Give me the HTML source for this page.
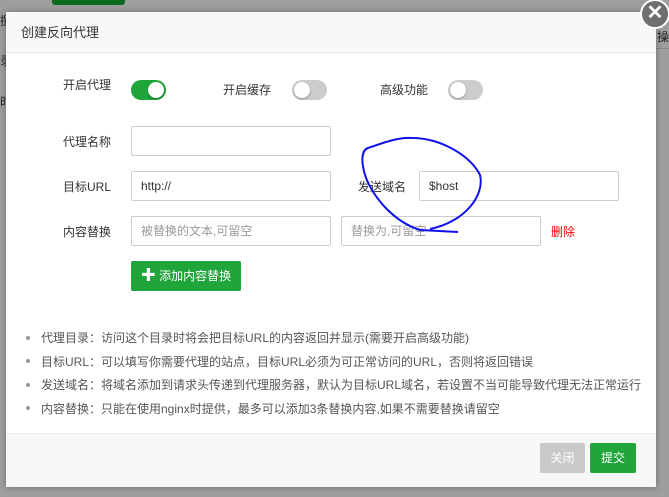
<!DOCTYPE html>
<html><head><meta charset="utf-8"><style>
*{margin:0;padding:0;box-sizing:border-box}
body{width:669px;height:497px;background:#9e9e9e;position:relative;overflow:hidden;font-family:"Liberation Sans","Noto Sans CJK SC",sans-serif;font-size:12px;color:#333}
.abs{position:absolute}
.dlg{left:6px;top:12px;width:650px;height:475px;background:#fff;box-shadow:0 0 6px rgba(0,0,0,.3)}
.hd{left:0;top:0;width:650px;height:41px;background:#f8f8f8;border-bottom:1px solid #e8e8e8;font-size:13px;line-height:41px;padding-left:15px;color:#333}
.ft{left:0;top:421px;width:650px;height:54px;background:#f6f8f8;border-top:1px solid #e8eaea}
.lbl{font-size:12px;color:#333;text-align:right;width:70px}
.inp{border:1px solid #ccc;border-radius:2px;height:30px;width:200px;background:#fff;line-height:28px;padding-left:9px;font-size:12px;color:#333}
.ph{color:#999}
.sw{width:35px;height:20px;border-radius:10px;background:#ccc}
.sw i{position:absolute;top:2px;width:16px;height:16px;border-radius:50%;background:#fff;box-shadow:0 1px 2px rgba(0,0,0,.3)}
.tips{left:16px;top:315px;font-size:12px;color:#555;line-height:23.5px}
.tips div:before{content:"";display:inline-block;width:4px;height:4px;border-radius:50%;background:#999;margin:0 11px 2px 4px;vertical-align:middle}
</style></head><body>
<div class="abs" style="left:52px;top:0;width:73px;height:5px;background:#0c6b1c;border-radius:0 0 3px 3px"></div>
<div class="abs" style="left:0;top:12px;font-size:12px;color:#222">捌</div>
<div class="abs" style="left:0;top:52px;font-size:12px;color:#222">录</div>
<div class="abs" style="left:0;top:93px;font-size:12px;color:#222">时</div>
<div class="abs" style="left:657px;top:28px;font-size:12px;color:#222">操</div>
<div class="abs" style="left:656px;top:48px;width:13px;height:1px;background:#888"></div>
<div class="abs dlg">
 <div class="abs hd">创建反向代理</div>
 <div class="abs lbl" style="left:35px;top:64px;">开启代理</div>
 <div class="abs sw" style="left:125px;top:68px;background:#20a53a"><i style="left:17px"></i></div>
 <div class="abs lbl" style="left:195px;top:69px;">开启缓存</div>
 <div class="abs sw" style="left:286px;top:68px"><i style="left:2px"></i></div>
 <div class="abs lbl" style="left:352px;top:69px;">高级功能</div>
 <div class="abs sw" style="left:442px;top:68px"><i style="left:2px"></i></div>

 <div class="abs lbl" style="left:35px;top:121px;">代理名称</div>
 <div class="abs inp" style="left:125px;top:114px"></div>
 <div class="abs lbl" style="left:35px;top:166px;">目标URL</div>
 <div class="abs inp" style="left:125px;top:159px">http://</div>
 <div class="abs lbl" style="left:330px;top:166px;">发送域名</div>
 <div class="abs inp" style="left:413px;top:159px">$host</div>
 <div class="abs lbl" style="left:35px;top:211px;">内容替换</div>
 <div class="abs inp ph" style="left:125px;top:204px">被替换的文本,可留空</div>
 <div class="abs inp ph" style="left:335px;top:204px">替换为,可留空</div>
 <div class="abs" style="left:545px;top:211px;color:#f00">删除</div>
 <div class="abs" style="left:125px;top:249px;width:110px;height:30px;background:#20a53a;border-radius:2px;color:#fff;line-height:30px;font-size:12px;text-align:center"><b style="font-size:15px">✚</b> 添加内容替换</div>

 <div class="abs tips">
  <div>代理目录：访问这个目录时将会把目标URL的内容返回并显示(需要开启高级功能)</div>
  <div>目标URL：可以填写你需要代理的站点，目标URL必须为可正常访问的URL，否则将返回错误</div>
  <div>发送域名：将域名添加到请求头传递到代理服务器，默认为目标URL域名，若设置不当可能导致代理无法正常运行</div>
  <div>内容替换：只能在使用nginx时提供，最多可以添加3条替换内容,如果不需要替换请留空</div>
 </div>
 <div class="abs ft">
  <div class="abs" style="left:534px;top:9px;width:45px;height:30px;background:#c9c9c9;border-radius:2px;color:#fff;text-align:center;line-height:30px">关闭</div>
  <div class="abs" style="left:584px;top:9px;width:46px;height:30px;background:#20a53a;border-radius:2px;color:#fff;text-align:center;line-height:30px">提交</div>
 </div>
</div>
<div class="abs" style="left:640px;top:-1px;width:30px;height:30px;border-radius:50%;background:#6f6f6f;border:2px solid #fff;color:#fff;font-size:20px;line-height:25px;text-align:center;font-weight:bold">✕</div>
<svg class="abs" style="left:0;top:0" width="669" height="497">
<path d="M458,232 L420,230 C395,222 375,200 366,178 C360,160 362,150 368,148 C385,142 400,137 412,138 C440,138 470,155 480,175 C485,195 465,222 430,229" fill="none" stroke="#1010ee" stroke-width="2"/>
</svg>
</body></html>
